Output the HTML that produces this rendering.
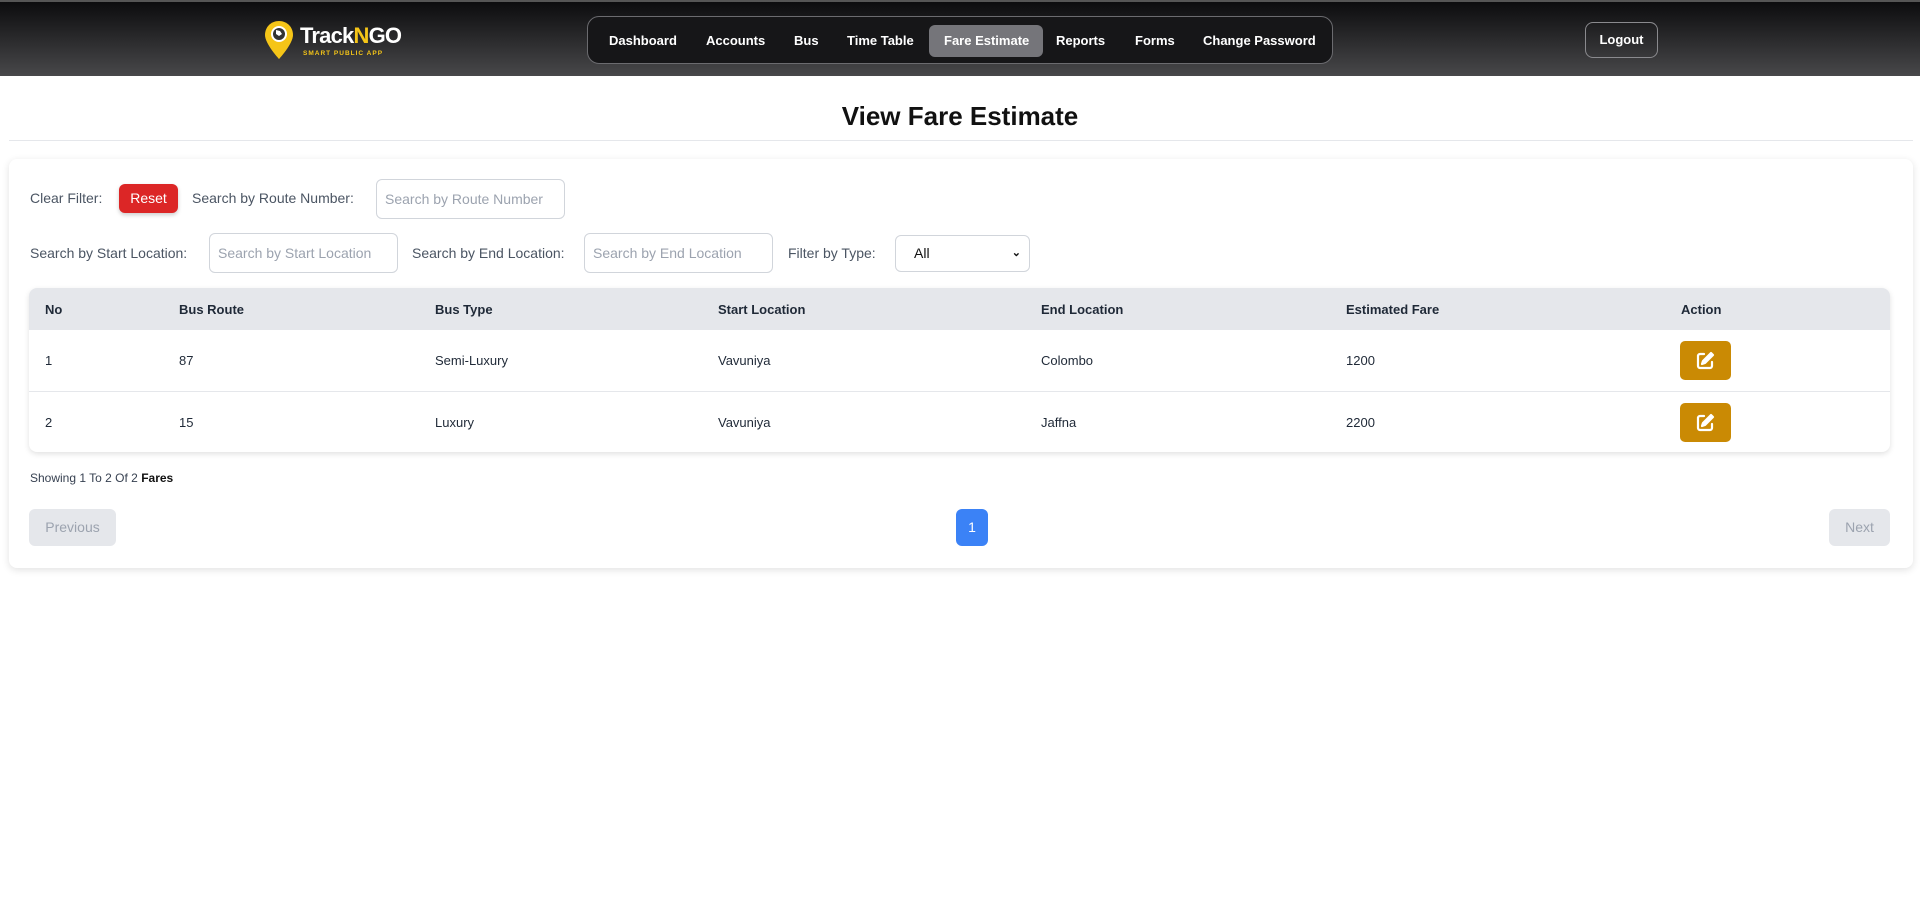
<!DOCTYPE html>
<html><head><meta charset="utf-8"><style>
*{box-sizing:border-box;margin:0;padding:0}
body{width:1920px;height:922px;background:#fff;font-family:"Liberation Sans",sans-serif;color:#374151;position:relative;overflow:hidden}
.hdr{position:absolute;left:0;top:0;width:1920px;height:76px;background:linear-gradient(#0c0c0e,#48484a);border-top:2px solid #555}
.nav{position:absolute;left:587px;top:14px;width:746px;height:48px;border:1px solid #6b6b6f;border-radius:12px;background:#161618}
.nav a{position:absolute;top:9px;height:30px;line-height:30px;color:#fff;font-size:13px;font-weight:bold;text-decoration:none;white-space:nowrap}
.pill{position:absolute;left:341px;top:8px;width:114px;height:32px;background:#75757a;border-radius:6px}
.logout{position:absolute;left:1585px;top:20px;width:73px;height:36px;border:1px solid #8a8a8e;border-radius:8px;color:#fff;font-size:13px;font-weight:bold;text-align:center;line-height:34px}
h1{position:absolute;top:101px;width:1920px;text-align:center;font-size:26px;font-weight:bold;color:#111}
.line{position:absolute;left:9px;top:140px;width:1904px;height:1px;background:#e5e7eb}
.card{position:absolute;left:9px;top:159px;width:1904px;height:409px;border-radius:8px;box-shadow:0 2px 8px rgba(0,0,0,.12);background:#fff}
.lbl{position:absolute;font-size:14px;color:#4b5563}
.inp{position:absolute;height:40px;border:1px solid #d1d5db;border-radius:6px;font-size:14px;color:#9ca3af;padding:0 8px;line-height:38px;background:#fff;white-space:nowrap}
.tbl{position:absolute;left:29px;top:288px;width:1861px;height:164px;border-radius:8px;box-shadow:0 2px 6px rgba(0,0,0,.12);overflow:hidden}
.th{position:absolute;top:0;left:0;width:100%;height:42px;background:#e5e7eb}
.c{position:absolute;font-size:13px;color:#1f2937}
.b{font-weight:bold}
.edit{position:absolute;left:1651px;width:51px;height:39px;background:#ca8a04;border-radius:5px}
.pg{position:absolute;top:509px;height:37px;border-radius:6px;font-size:14px;text-align:center;line-height:37px}
</style></head><body>
<div class="hdr">
<svg style="position:absolute;left:263px;top:17px" width="32" height="42" viewBox="0 0 32 42"><path d="M16 2C8 2 2 8 2 16c0 9 14 24 14 24s14-15 14-24C30 8 24 2 16 2z" fill="#f5c518"/><circle cx="16" cy="15" r="8" fill="#fff"/><circle cx="16" cy="15" r="6" fill="#333"/><path d="M13 11l4 1 2 3-3 2-3-2z" fill="#fff"/></svg>
<div style="position:absolute;left:300px;top:21px;color:#fff;font-weight:bold;font-size:22px;letter-spacing:-0.8px">Track<span style="color:#f5c518">N</span>GO</div>
<div style="position:absolute;left:303px;top:48px;color:#f5c518;font-weight:bold;font-size:6.5px;letter-spacing:1px">SMART PUBLIC APP</div>
<div class="nav">
<div class="pill"></div>
<a style="left:21px">Dashboard</a><a style="left:118px">Accounts</a><a style="left:206px">Bus</a><a style="left:259px">Time Table</a>
<a style="left:356px">Fare Estimate</a><a style="left:468px">Reports</a><a style="left:547px">Forms</a><a style="left:615px">Change Password</a>
</div>
<div class="logout">Logout</div>
</div>
<h1>View Fare Estimate</h1>
<div class="line"></div>
<div class="card"></div>
<div class="lbl" style="left:30px;top:190px">Clear Filter:</div>
<div style="position:absolute;left:119px;top:184px;width:59px;height:29px;background:#dc2626;border-radius:6px;color:#fff;font-size:14px;text-align:center;line-height:29px;box-shadow:0 2px 4px rgba(0,0,0,.2)">Reset</div>
<div class="lbl" style="left:192px;top:190px">Search by Route Number:</div>
<div class="inp" style="left:376px;top:179px;width:189px">Search by Route Number</div>
<div class="lbl" style="left:30px;top:245px">Search by Start Location:</div>
<div class="inp" style="left:209px;top:233px;width:189px">Search by Start Location</div>
<div class="lbl" style="left:412px;top:245px">Search by End Location:</div>
<div class="inp" style="left:584px;top:233px;width:189px">Search by End Location</div>
<div class="lbl" style="left:788px;top:245px">Filter by Type:</div>
<div class="inp" style="left:895px;top:235px;width:135px;color:#111;padding-left:18px;height:37px;line-height:35px">All<span style="position:absolute;right:8px;font-size:11px;font-weight:bold">&#8964;</span></div>
<div class="tbl">
<div class="th"></div>
<div class="c b" style="left:16px;top:14px">No</div><div class="c b" style="left:150px;top:14px">Bus Route</div><div class="c b" style="left:406px;top:14px">Bus Type</div><div class="c b" style="left:689px;top:14px">Start Location</div><div class="c b" style="left:1012px;top:14px">End Location</div><div class="c b" style="left:1317px;top:14px">Estimated Fare</div><div class="c b" style="left:1652px;top:14px">Action</div>
<div class="c" style="left:16px;top:65px">1</div><div class="c" style="left:150px;top:65px">87</div><div class="c" style="left:406px;top:65px">Semi-Luxury</div><div class="c" style="left:689px;top:65px">Vavuniya</div><div class="c" style="left:1012px;top:65px">Colombo</div><div class="c" style="left:1317px;top:65px">1200</div>
<div style="position:absolute;left:0;top:103px;width:100%;height:1px;background:#e5e7eb"></div>
<div class="c" style="left:16px;top:127px">2</div><div class="c" style="left:150px;top:127px">15</div><div class="c" style="left:406px;top:127px">Luxury</div><div class="c" style="left:689px;top:127px">Vavuniya</div><div class="c" style="left:1012px;top:127px">Jaffna</div><div class="c" style="left:1317px;top:127px">2200</div>
<div class="edit" style="top:53px"><svg style="margin:10px 16px" width="19" height="19" viewBox="0 0 19 19" fill="none" stroke="#fff" stroke-width="2.2" stroke-linecap="round" stroke-linejoin="round"><path d="M8 3H4a2 2 0 0 0-2 2v10a2 2 0 0 0 2 2h10a2 2 0 0 0 2-2v-4"/><path d="M15 2l2 2-8 8-3 1 1-3z" fill="#fff"/></svg></div>
<div class="edit" style="top:115px"><svg style="margin:10px 16px" width="19" height="19" viewBox="0 0 19 19" fill="none" stroke="#fff" stroke-width="2.2" stroke-linecap="round" stroke-linejoin="round"><path d="M8 3H4a2 2 0 0 0-2 2v10a2 2 0 0 0 2 2h10a2 2 0 0 0 2-2v-4"/><path d="M15 2l2 2-8 8-3 1 1-3z" fill="#fff"/></svg></div>
</div>
<div style="position:absolute;left:30px;top:471px;font-size:12px;color:#374151">Showing 1 To 2 Of 2 <b style="color:#111">Fares</b></div>
<div class="pg" style="left:29px;width:87px;background:#e5e7eb;color:#9ca3af">Previous</div>
<div class="pg" style="left:956px;width:32px;background:#3b82f6;color:#fff">1</div>
<div class="pg" style="left:1829px;width:61px;background:#e5e7eb;color:#9ca3af">Next</div>
</body></html>
